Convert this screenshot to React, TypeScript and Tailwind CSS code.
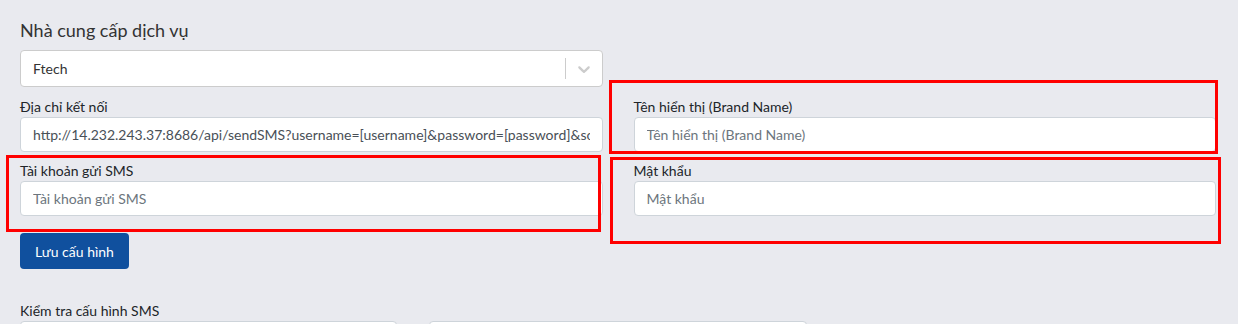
import React from 'react';

const inputCls =
  'block w-full h-[35px] px-3 bg-white border border-[#ced4da] rounded-[4px] text-[14px] text-[#495057] placeholder:text-[#6c757d] outline-none';

function Field({ label, placeholder, value }: { label: string; placeholder?: string; value?: string }) {
  return (
    <div>
      <label className="block text-[14px] leading-[20px] text-[#212529]">{label}</label>
      <input className={inputCls} placeholder={placeholder} defaultValue={value} readOnly />
    </div>
  );
}

function Chevron() {
  return (
    <svg width="20" height="20" viewBox="0 0 20 20" fill="#cccccc" aria-hidden="true">
      <path d="M4.516 7.548c0.436-0.446 1.043-0.481 1.576 0l3.908 3.747 3.908-3.747c0.533-0.481 1.141-0.446 1.574 0 0.436 0.445 0.408 1.197 0 1.615-0.406 0.418-4.695 4.502-4.695 4.502-0.217 0.223-0.502 0.335-0.787 0.335s-0.57-0.112-0.789-0.335c0 0-4.287-4.084-4.695-4.502s-0.436-1.17 0-1.615z" />
    </svg>
  );
}

export default function App() {
  return (
    <div
      className="relative h-[324px] w-full overflow-hidden bg-[#e9eaef]"
      style={{ fontFamily: 'Lato, "Liberation Sans", sans-serif' }}>
      <div className="ml-[20px] w-[1196px] pt-[18px]">
        {/* nhà cung cấp */}
        <div className="grid grid-cols-2 gap-x-[31px]">
          <div>
            <h3 className="text-[18px] leading-[24px] text-[#333] mb-[8px]">Nhà cung cấp dịch vụ</h3>
            <div className="flex h-[37px] items-center bg-white border border-[#cccccc] rounded-[4px]">
              <div className="flex-1 pl-[12px] text-[14px] text-[#333]">Ftech</div>
              <span className="w-px h-[21px] bg-[#cccccc]" />
              <div className="px-[8px] flex items-center">
                <Chevron />
              </div>
            </div>
          </div>
          <div />
        </div>

        {/* cấu hình */}
        <div className="grid grid-cols-2 gap-x-[31px] gap-y-[9px] mt-[10px]">
          <Field label="Địa chỉ kết nối" value="http://14.232.243.37:8686/api/sendSMS?username=[username]&password=[password]&source=[brandname]&dest=[phone]&message=[message]" />
          <Field label="Tên hiển thị (Brand Name)" placeholder="Tên hiển thị (Brand Name)" />
          <Field label="Tài khoản gửi SMS" placeholder="Tài khoản gửi SMS" />
          <Field label="Mật khẩu" placeholder="Mật khẩu" />
        </div>

        <button className="mt-[17px] h-[36px] w-[109px] rounded-[4px] bg-[#10509e] text-[14px] text-white">
          Lưu cấu hình
        </button>

        {/* kiểm tra */}
        <div className="mt-[32px]">
          <label className="block text-[14px] leading-[20px] text-[#212529]">Kiểm tra cấu hình SMS</label>
          <div className="grid grid-cols-3 gap-x-[32px]">
            <input className={inputCls} readOnly />
            <input className={inputCls} readOnly />
            <div />
          </div>
        </div>
      </div>

      {/* annotation boxes */}
      <div className="absolute left-[609px] top-[80px] w-[609px] h-[74px] border-[3px] border-[#ff0000]" />
      <div className="absolute left-[6px] top-[155px] w-[595px] h-[77px] border-[3px] border-[#ff0000]" />
      <div className="absolute left-[610px] top-[157px] w-[611px] h-[87px] border-[3px] border-[#ff0000]" />
    </div>
  );
}
